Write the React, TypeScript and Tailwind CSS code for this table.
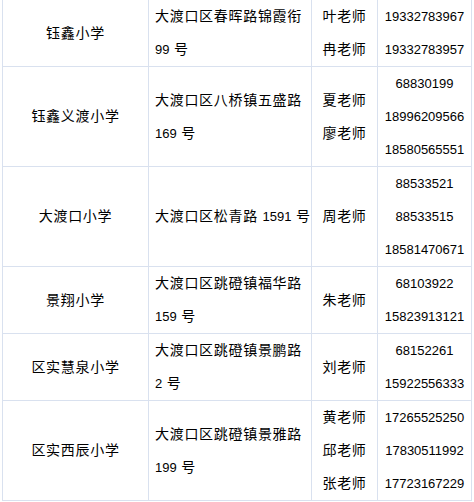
import React from 'react';

interface School {
  name: string;
  address: string[];
  teachers: string[];
  phones: string[];
}

const schools: School[] = [
  {
    name: '钰鑫小学',
    address: ['大渡口区春晖路锦霞衔', '99 号'],
    teachers: ['叶老师', '冉老师'],
    phones: ['19332783967', '19332783957'],
  },
  {
    name: '钰鑫义渡小学',
    address: ['大渡口区八桥镇五盛路', '169 号'],
    teachers: ['夏老师', '廖老师'],
    phones: ['68830199', '18996209566', '18580565551'],
  },
  {
    name: '大渡口小学',
    address: ['大渡口区松青路 1591 号'],
    teachers: ['周老师'],
    phones: ['88533521', '88533515', '18581470671'],
  },
  {
    name: '景翔小学',
    address: ['大渡口区跳磴镇福华路', '159 号'],
    teachers: ['朱老师'],
    phones: ['68103922', '15823913121'],
  },
  {
    name: '区实慧泉小学',
    address: ['大渡口区跳磴镇景鹏路', '2 号'],
    teachers: ['刘老师'],
    phones: ['68152261', '15922556333'],
  },
  {
    name: '区实西辰小学',
    address: ['大渡口区跳磴镇景雅路', '199 号'],
    teachers: ['黄老师', '邱老师', '张老师'],
    phones: ['17265525250', '17830511992', '17723167229'],
  },
];

// digits get the narrower latin face, hanzi fall through to Noto CJK
const mixed = (line: string) =>
  line.split(/(\d+)/).map((part, i) =>
    /^\d+$/.test(part) ? (
      <span key={i} className="text-[13px] tracking-normal">
        {part}
      </span>
    ) : (
      <span key={i}>{part}</span>
    )
  );

const cell = 'border border-[#d9e1ef] p-0 align-middle leading-[33px]';

const App = () => {
  return (
    <div className="min-h-screen bg-white">
      <table
        className="ml-[2px] -mt-px table-fixed border-collapse w-[469px] text-[14px] tracking-[0.7px] text-black"
        style={{ fontFamily: '"Liberation Sans", "Noto Sans CJK SC", sans-serif' }}
      >
        <colgroup>
          <col className="w-[146px]" />
          <col className="w-[163px]" />
          <col className="w-[66px]" />
          <col className="w-[94px]" />
        </colgroup>
        <tbody>
          {schools.map((s) => (
            <tr key={s.name}>
              <td className={`${cell} text-center`}>{s.name}</td>
              <td className={`${cell} pl-[6px] whitespace-nowrap`}>
                {s.address.map((line) => (
                  <div key={line}>{mixed(line)}</div>
                ))}
              </td>
              <td className={`${cell} text-center`}>
                {s.teachers.map((t) => (
                  <div key={t}>{t}</div>
                ))}
              </td>
              <td className={`${cell} text-center text-[13px] tracking-normal`}>
                {s.phones.map((p) => (
                  <div key={p}>{p}</div>
                ))}
              </td>
            </tr>
          ))}
        </tbody>
      </table>
    </div>
  );
};

export default App;
